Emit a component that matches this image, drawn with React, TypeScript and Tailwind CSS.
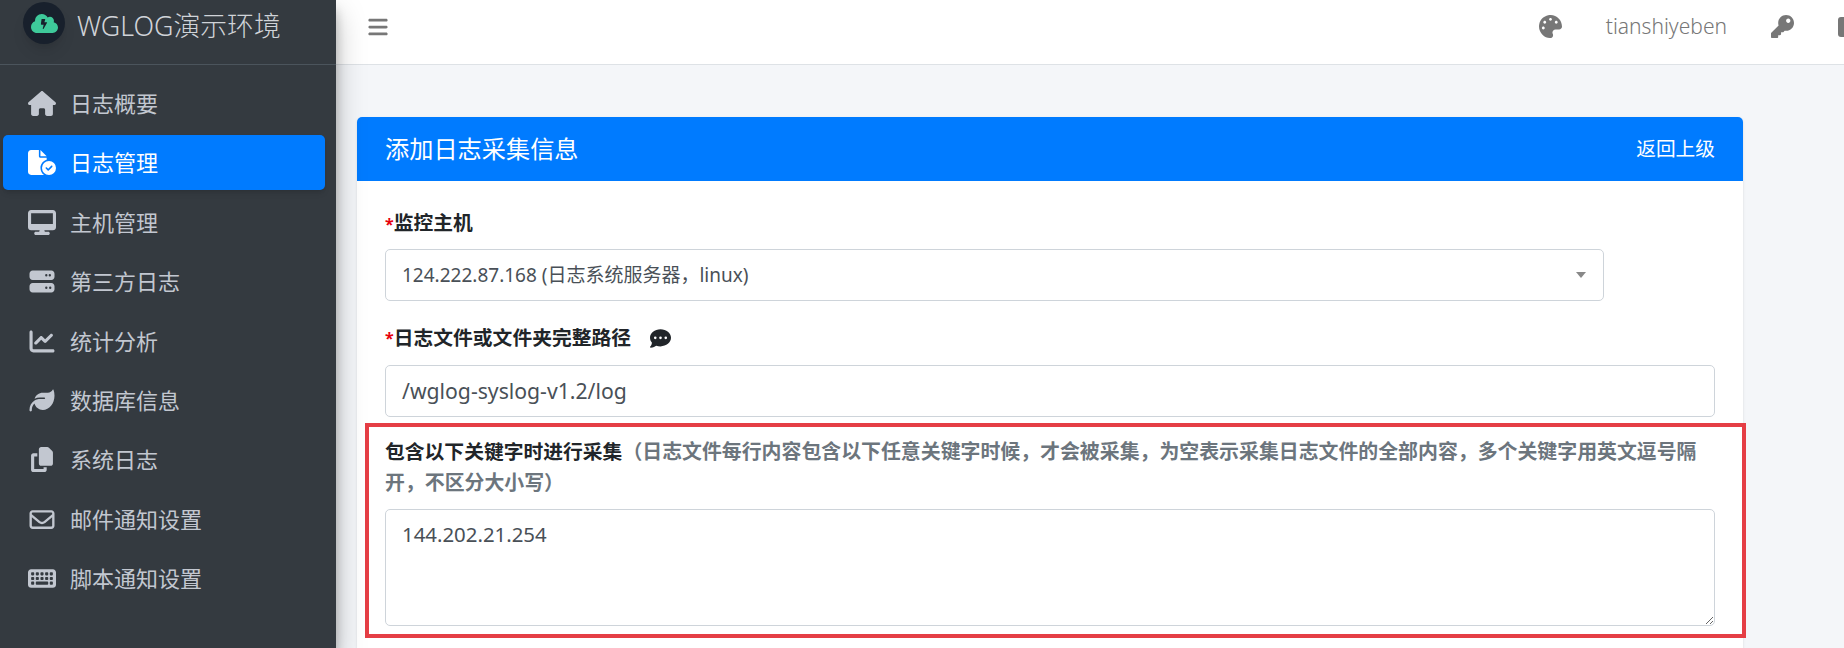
import { FaPalette, FaKey, FaBolt, FaCloud } from "react-icons/fa";
import { FaHouse, FaFileCircleCheck, FaDesktop, FaServer, FaChartLine, FaLeaf, FaCopy, FaRegEnvelope, FaKeyboard, FaCommentDots, FaBars } from "react-icons/fa6";

const menu = [
  { label: "日志概要", icon: FaHouse },
  { label: "日志管理", icon: FaFileCircleCheck, active: true },
  { label: "主机管理", icon: FaDesktop },
  { label: "第三方日志", icon: FaServer },
  { label: "统计分析", icon: FaChartLine },
  { label: "数据库信息", icon: FaLeaf },
  { label: "系统日志", icon: FaCopy },
  { label: "邮件通知设置", icon: FaRegEnvelope },
  { label: "脚本通知设置", icon: FaKeyboard },
];

function Sidebar() {
  return (
    <aside className="relative z-10 w-[336px] shrink-0 bg-[#343a40] text-[#c2c7d0] shadow-[0_14px_28px_rgba(0,0,0,0.25),0_10px_10px_rgba(0,0,0,0.22)]">
      {/* Brand */}
      <div className="h-[65px] border-b border-[#4b545c] flex items-start pl-[23px]">
        <div className="mt-[2px] w-[42px] h-[42px] rounded-full bg-[#18202c] shadow-lg flex items-center justify-center relative">
          <FaCloud className="w-[27px] h-[27px] text-[#3ec99a]" />
          <FaBolt className="absolute w-[10px] h-[10px] text-[#18202c] left-[16px] top-[17px]" />
        </div>
        <span className="ml-[12px] mt-[8px] text-[26.8px] leading-[36px] font-light text-[#d0d3d8]">WGLOG演示环境</span>
      </div>
      {/* Menu */}
      <nav className="pt-[11px] pl-[3px] pr-[11px] flex flex-col gap-[4.4px]">
        {menu.map((item) => {
          const Icon = item.icon;
          return (
            <div
              key={item.label}
              className={`h-[55px] rounded-[5px] flex items-center pl-[25px] text-[22px] ${item.active ? "bg-[#007bff] text-white shadow-md" : ""}`}
            >
              <Icon className="w-[28px] h-[25px] shrink-0" />
              <span className="ml-[14px]">{item.label}</span>
            </div>
          );
        })}
      </nav>
    </aside>
  );
}

function Topbar() {
  return (
    <header className="h-[65px] shrink-0 bg-white border-b border-[#dee2e6] pb-[11px] flex items-center text-[#777] overflow-hidden">
      <FaBars className="ml-[31px] w-[22px] h-[22px]" />
      <div className="ml-auto flex items-center -mr-[16px]">
        <FaPalette className="w-[23px] h-[23px]" />
        <span className="ml-[44px] text-[21px] font-light">tianshiyeben</span>
        <FaKey className="ml-[44px] w-[23px] h-[23px]" />
        <div className="ml-[44px] w-[22px] h-[20px] rounded-[3px] bg-[#777]" />
      </div>
    </header>
  );
}

function Star() {
  return <span className="text-red-600 text-[16px]">*</span>;
}

export default function App() {
  return (
    <div className="h-[648px] flex overflow-hidden font-['Noto_Sans','Noto_Sans_CJK_SC',sans-serif]">
      <Sidebar />
      <div className="flex-1 min-w-0 flex flex-col bg-[#f4f6f9]">
        <Topbar />
        <main className="flex-1 pt-[52px] pl-[21px] pr-[101px]">
          <div className="bg-white rounded-t-[5px] shadow-sm h-full">
            <div className="h-[64px] bg-[#007bff] rounded-t-[5px] text-white flex items-center justify-between px-[28px]">
              <span className="text-[24.2px]">添加日志采集信息</span>
              <span className="text-[19.7px]">返回上级</span>
            </div>
            <div className="pt-[22px] px-[28px] text-[19.8px]">
              <div className="font-bold text-[#212529] leading-[40px]"><Star />监控主机</div>
              <div className="mt-[5px] w-[1219px]">
                <div className="h-[52px] border border-[#ced4da] rounded-[5px] bg-white flex items-center justify-between pl-[16px] pr-[17px] text-[#495057] text-[19px]">
                  <span>124.222.87.168 (日志系统服务器，linux)</span>
                  <span className="w-0 h-0 border-x-[5px] border-x-transparent border-t-[6px] border-t-[#888]" />
                </div>
              </div>
              <div className="mt-[17px] font-bold text-[#212529] leading-[40px] flex items-center">
                <Star />日志文件或文件夹完整路径
                <FaCommentDots className="ml-[19px] w-[21px] h-[21px]" />
              </div>
              <div className="mt-[7px] text-[21.2px]">
                <div className="h-[52px] border border-[#ced4da] rounded-[5px] bg-white flex items-center px-[16px] text-[#495057]">/wglog-syslog-v1.2/log</div>
              </div>
              <div className="relative mt-[20px]">
                <div className="absolute -left-[20px] -right-[31px] -top-[14px] h-[215px] border-[4px] border-[#e53e45]" />
                <div className="font-bold text-[#6c757d] leading-[30.6px]">
                  <span className="text-[#212529]">包含以下关键字时进行采集</span>
                  <span className="text-[19.9px]">（日志文件每行内容包含以下任意关键字时候，才会被采集，为空表示采集日志文件的全部内容，多个关键字用英文逗号隔开，不区分大小写）</span>
                </div>
                <textarea
                  readOnly
                  value="144.202.21.254"
                  className="mt-[11px] block w-full h-[117px] border border-[#ced4da] rounded-[5px] bg-white pt-[9px] px-[16px] text-[20.4px] text-[#495057] outline-none"
                />
              </div>
            </div>
          </div>
        </main>
      </div>
    </div>
  );
}
